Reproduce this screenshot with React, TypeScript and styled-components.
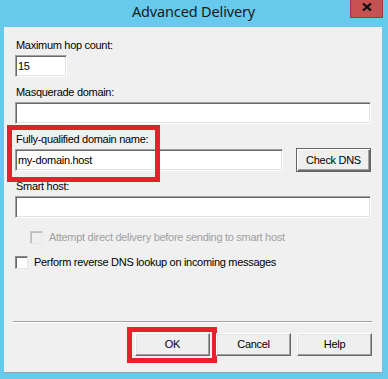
import React from "react";
import styled, { createGlobalStyle, css } from "styled-components";

const Global = createGlobalStyle`
  html, body { margin: 0; padding: 0; background: #67c9eb; }
  body { font-family: "Liberation Sans", Arial, sans-serif; }
`;

const Window = styled.div`
  width: 388px;
  height: 379px;
  display: flex;
  flex-direction: column;
  background: #67c9eb;
  overflow: hidden;
`;

const TitleBar = styled.div`
  height: 27px;
  display: grid;
  grid-template-columns: 1fr auto 1fr;
  align-items: start;
  padding-right: 5px;
`;

const Title = styled.div`
  grid-column: 2;
  padding-left: 4px;
  font-family: "Noto Sans", "Open Sans", sans-serif;
  font-size: 14.5px;
  letter-spacing: -0.15px;
  line-height: 22px;
  color: #1a1a1a;
`;

const CloseButton = styled.div`
  grid-column: 3;
  justify-self: end;
  width: 33px;
  height: 18px;
  box-sizing: border-box;
  background: #c75050;
  border: 1px solid #9d3b3b;
  border-top: none;
  display: flex;
  align-items: center;
  justify-content: center;
  padding-bottom: 4px;
`;

const Client = styled.div`
  margin: 0 6px 0 4px;
  height: 345px;
  box-sizing: border-box;
  background: #f0f0f0;
  box-shadow: 0 1px 0 #9aa5aa;
  display: flex;
  flex-direction: column;
  padding: 12px 11px 0 11px;
  font-size: 11px;
  letter-spacing: -0.3px;
  line-height: 13px;
  color: #000;
`;

const Field = styled.div<{ $mt?: number }>`
  display: flex;
  flex-direction: column;
  position: relative;
  margin-top: ${(p) => p.$mt ?? 0}px;
`;

const Label = styled.div`
  padding-left: 1px;
  height: 13px;
  margin-bottom: 3px;
  white-space: nowrap;
`;

const Input = styled.div<{ $width?: number; $grow?: boolean }>`
  box-sizing: border-box;
  height: 22px;
  flex: none;
  ${(p) =>
    p.$width &&
    css`
      width: ${p.$width}px;
    `}
  ${(p) =>
    p.$grow &&
    css`
      flex: 1;
    `}
  background: #fff;
  border: 1px solid;
  border-color: #a0a0a0 #ffffff #ffffff #a0a0a0;
  box-shadow: inset 1px 1px 0 #696969, inset -1px -1px 0 #e3e3e3;
  padding: 4px 0 0 2px;
  font-size: 11px;
  line-height: 13px;
  white-space: nowrap;
`;

const InputRow = styled.div`
  margin-top: -1px;
  height: 24px;
  display: flex;
  align-items: center;
  gap: 13px;
`;

const Button = styled.div<{ $default?: boolean }>`
  box-sizing: border-box;
  width: 75px;
  height: 23px;
  display: flex;
  align-items: center;
  justify-content: center;
  background: #efefef;
  border: 1px solid;
  border-color: #ffffff #696969 #696969 #ffffff;
  box-shadow: inset -1px -1px 0 #a0a0a0, inset 1px 1px 0 #e3e3e3;
  font-size: 11px;
  position: relative;
  flex: none;
  ${(p) =>
    p.$default &&
    css`
      height: 24px;
      border: 1px solid #646464;
      box-shadow: inset 1px 1px 0 #ffffff, inset -1px -1px 0 #696969,
        inset -2px -2px 0 #a0a0a0;
    `}
`;

const Highlight = styled.div<{ $l: number; $t: number; $w: number; $h: number }>`
  position: absolute;
  left: ${(p) => p.$l}px;
  top: ${(p) => p.$t}px;
  width: ${(p) => p.$w}px;
  height: ${(p) => p.$h}px;
  box-sizing: border-box;
  border: 5px solid #e8202a;
  pointer-events: none;
`;

const CheckRow = styled.div<{ $mt: number; $indent?: number; $disabled?: boolean }>`
  display: flex;
  align-items: center;
  gap: 6px;
  margin-top: ${(p) => p.$mt}px;
  padding-left: ${(p) => p.$indent ?? 0}px;
  height: 13px;
  font-size: 11px;
  color: ${(p) => (p.$disabled ? "#a0a0a0" : "#000")};
  white-space: nowrap;
`;

const Box = styled.span<{ $disabled?: boolean }>`
  box-sizing: border-box;
  width: 13px;
  height: 13px;
  flex: none;
  background: ${(p) => (p.$disabled ? "#f0f0f0" : "#fff")};
  border: 1px solid;
  border-color: ${(p) =>
    p.$disabled ? "#c8c8c8 #e8e8e8 #e8e8e8 #c8c8c8" : "#8a8a8a #e3e3e3 #e3e3e3 #8a8a8a"};
  box-shadow: ${(p) =>
    p.$disabled ? "inset 1px 1px 0 #bdbdbd" : "inset 1px 1px 0 #696969"};
`;

const Separator = styled.div`
  margin: 52px -1px 0 -2px;
  height: 1px;
  background: #a0a0a0;
  box-shadow: 0 1px 0 #ffffff;
`;

const Footer = styled.div`
  margin-top: 11px;
  margin-right: -1px;
  display: flex;
  justify-content: flex-end;
  gap: 6px;
`;

export default function App() {
  return (
    <>
      <Global />
      <Window>
        <TitleBar>
          <Title>Advanced Delivery</Title>
          <CloseButton>
            <svg width="10" height="8" viewBox="0 0 10 8">
              <path d="M1 0.5 L9 7.5 M9 0.5 L1 7.5" stroke="#111" strokeWidth="2.3" />
            </svg>
          </CloseButton>
        </TitleBar>
        <Client>
          <Field>
            <Label>Maximum hop count:</Label>
            <Input $width={52}>15</Input>
          </Field>
          <Field $mt={9}>
            <Label>Masquerade domain:</Label>
            <Input />
          </Field>
          <Field $mt={9}>
            <Label>Fully-qualified domain name:</Label>
            <InputRow>
              <Input $grow>my-domain.host</Input>
              <Button $default>Check DNS</Button>
            </InputRow>
            <Highlight $l={-8} $t={-8} $w={153} $h={57} />
          </Field>
          <Field $mt={8}>
            <Label>Smart host:</Label>
            <Input />
          </Field>
          <CheckRow $mt={13} $indent={15} $disabled>
            <Box $disabled />
            Attempt direct delivery before sending to smart host
          </CheckRow>
          <CheckRow $mt={12}>
            <Box />
            Perform reverse DNS lookup on incoming messages
          </CheckRow>
          <Separator />
          <Footer>
            <Button>
              OK
              <Highlight $l={-9} $t={-7} $w={90} $h={36} />
            </Button>
            <Button>Cancel</Button>
            <Button>Help</Button>
          </Footer>
        </Client>
      </Window>
    </>
  );
}
